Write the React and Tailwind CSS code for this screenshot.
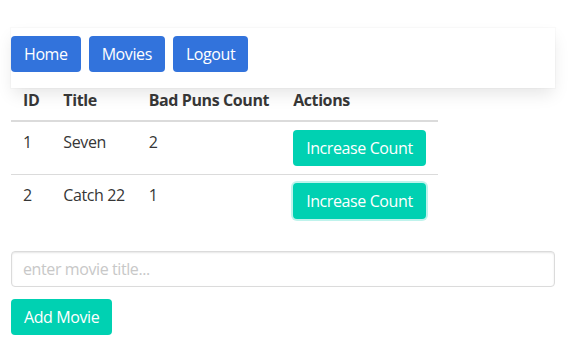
export default function App() {
  const rows = [
    { id: 1, title: "Seven", count: 2, focus: false },
    { id: 2, title: "Catch 22", count: 1, focus: true },
  ];
  return (
    <div
      className="w-[572px] h-[349px] bg-white text-[16px] leading-6 tracking-[-0.4px] text-[#4a4a4a] overflow-hidden"
      style={{ fontFamily: '"Open Sans", "Noto Sans", sans-serif' }}
    >
      <div className="pl-[11px] pt-[28px] w-[555px]">
        <nav className="h-[60px] bg-white shadow-[0_8px_16px_-2px_rgba(10,10,10,0.1),0_0_0_1px_rgba(10,10,10,0.02)] pt-[8px] flex gap-2 items-start">
          {["Home", "Movies", "Logout"].map((t) => (
            <button
              key={t}
              className="h-9 px-3 rounded bg-[#3273dc] text-white border border-transparent leading-6"
            >
              {t}
            </button>
          ))}
        </nav>
        <table className="text-[#363636] border-collapse">
          <thead>
            <tr className="border-b-2 border-[#dbdbdb]">
              <th className="text-left font-bold px-3 pt-0 pb-2">ID</th>
              <th className="text-left font-bold px-3 pt-0 pb-2">Title</th>
              <th className="text-left font-bold px-3 pt-0 pb-2">Bad Puns Count</th>
              <th className="text-left font-bold px-3 pt-0 pb-2">Actions</th>
            </tr>
          </thead>
          <tbody>
            {rows.map((r, i) => (
              <tr key={r.id} className={i === 0 ? "border-b border-[#dbdbdb]" : ""}>
                <td className="px-3 py-2 align-top">{r.id}</td>
                <td className="px-3 py-2 align-top">{r.title}</td>
                <td className="px-3 py-2 align-top">{r.count}</td>
                <td className="px-3 py-2 align-top">
                  <button
                    className={
                      "h-9 px-3 rounded bg-[#00d1b2] text-white border border-transparent leading-6 whitespace-nowrap" +
                      (r.focus ? " shadow-[0_0_0_2px_rgba(0,209,178,0.25)]" : "")
                    }
                  >
                    Increase Count
                  </button>
                </td>
              </tr>
            ))}
          </tbody>
        </table>
        <div className="mt-6 flex flex-col items-start gap-3">
          <input
            className="w-[544px] h-9 rounded border border-[#dbdbdb] px-[11px] text-[#363636] placeholder:text-[#c8c8c8] shadow-[inset_0_1px_2px_rgba(10,10,10,0.1)] outline-none"
            placeholder="enter movie title..."
          />
          <button className="h-9 px-3 rounded bg-[#00d1b2] text-white border border-transparent leading-6">
            Add Movie
          </button>
        </div>
      </div>
    </div>
  );
}
